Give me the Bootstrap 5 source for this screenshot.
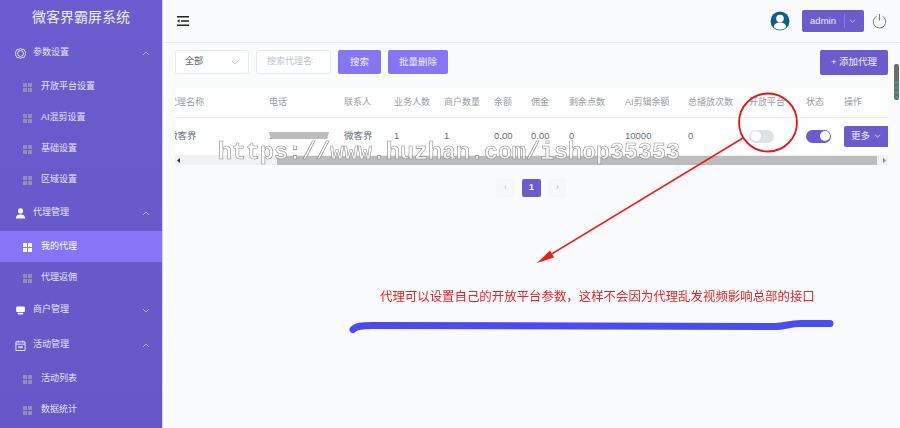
<!DOCTYPE html>
<html lang="zh">
<head>
  <meta charset="UTF-8">
  <title>微客界霸屏系统</title>
  <link href="https://cdn.jsdelivr.net/npm/bootstrap@5.3.3/dist/css/bootstrap.min.css" rel="stylesheet">
  <style>
    html, body { height: 100%; }
    body {
      background: #fafbfd;
      overflow: hidden;
      font-family: "Liberation Sans", "Noto Sans CJK SC", sans-serif;
      font-size: 9px;
      color: #606266;
    }
    .app-shell { height: 428px; position: relative; opacity: .995; }
    .side-panel {
      width: 163px;
      flex: none;
      background: linear-gradient(#6a5bcf, #6656c6);
      border-right: 1px solid #d5d5e0;
      color: #e8e6f8;
    }
    .side-title { height: 35px; font-size: 14px; color: #eeeefa; }
    .side-group { height: 36px; padding: 0 12px 0 15px; gap: 7px; }
    .side-group.short-group { height: 34px; }
    .side-group svg { flex: none; }
    .side-item { height: 31px; padding: 1px 0 0 23px; gap: 9px; }
    .side-item.active-item { background: #8674f4; color: #fff; }
    .side-chev { margin-left: auto; }
    .main-panel { min-width: 0; }
    .top-bar { height: 43px; border-bottom: 1px solid #e9ebef; padding: 0 13px 0 14px; }
    .user-face { margin-right: 12px; }
    .user-btn {
      width: 62px; height: 22px; background: #6a5acd; color: #eef;
      border-radius: 2px; font-size: 9.5px;
    }
    .user-btn span:first-child { width: 43px; text-align: center; border-right: 1px solid #8a7cdc; line-height: 14px; }
    .tool-row { padding: 7px 12px 0 12px; height: 45px; gap: 7px; }
    .fake-field { height: 24px; background: #fff; border: 1px solid #e9ebef; border-radius: 2px; }
    .fake-select { width: 74px; padding: 0 9px; color: #606266; }
    .fake-input { width: 75px; padding: 0 10px; color: #c0c4cc; }
    .fake-input span { display: block; width: 46px; overflow: hidden; white-space: nowrap; }
    .purple-btn {
      height: 24px; padding: 0; border: 0; border-radius: 2px;
      font-size: 9.5px; color: #f2f0ff; background: #8674f4;
    }
    .btn-search { width: 43px; }
    .btn-batch { width: 60px; }
    .btn-add { width: 68px; height: 25px; background: #6a5acd; margin-left: auto; }
    .table-wrap { margin: 0 12px; width: 713px; background: #fff; overflow: hidden; }
    .grid-table { table-layout: fixed; width: 713px; margin: 0; font-size: 9.5px; }
    .grid-table th, .grid-table td {
      padding: 0; background: transparent; white-space: nowrap; overflow: hidden;
      font-weight: 400; border-color: #eef0f3; vertical-align: middle; color: #6c6f76;
    }
    .grid-table th { height: 29px; padding-top: 1px; color: #9a9da4; font-size: 9px; }
    .grid-table td { height: 38px; }
    .clip-cell { margin-left: -7px; display: block; }
    .phone-mask { display: block; position: relative; }
    .phone-mask i {
      position: absolute; left: 0; top: 3px; width: 60px; height: 7px;
      background: #bdbdbd; clip-path: polygon(0 0, 100% 0, 97% 100%, 3% 100%);
    }
    .tog { display: block; width: 25px; height: 13px; border-radius: 7px; position: relative; background: #dfe2e8; }
    .tog::after {
      content: ""; position: absolute; top: 1.5px; left: 1.5px; width: 10px; height: 10px; border-radius: 50%; background: #fff;
    }
    .tog.tog-on { background: #6a5acd; }
    .tog.tog-on::after { left: 13.5px; }
    .more-btn {
      width: 44px; height: 21px; background: #6a5acd; color: #f0eeff;
      border-radius: 2px 0 0 2px; font-size: 9.5px;
    }
    .scroll-track { height: 9px; background: #f1f1f1; width: 713px; margin: 0 12px; padding: 0 2px; }
    .scroll-thumb { background: #bcbcbc; height: 9px; width: 600px; margin-left: 97px; }
    .pager { padding-top: 14px; gap: 7px; }
    .page-cell { width: 19px; height: 18px; background: #f6f7f9; color: #b5b8c0; border-radius: 2px; font-size: 9px; }
    .page-cell.cur { background: #6a5acd; color: #fff; font-weight: 700; }
    .over-art { position: absolute; left: 0; top: 0; pointer-events: none; }
    .note-text {
      position: absolute; left: 380px; top: 287px; font-size: 12.43px; line-height: 18px;
      color: #ee2020; white-space: nowrap;
      font-family: "Noto Sans CJK SC", sans-serif; font-weight: 400;
    }
    .stamp-text {
      position: absolute; left: 218px; top: 138px; white-space: nowrap;
      font-family: "Liberation Mono", monospace; font-size: 23.33px; font-weight: 700; line-height: 30px;
      color: rgba(255,255,255,.8); -webkit-text-stroke: .6px #8a8a8a; opacity: .95;
    }
  </style>
</head>
<body>
<div class="app-shell d-flex">

  <!-- Sidebar -->
  <div class="side-panel d-flex flex-column">
    <div class="side-title d-flex align-items-center justify-content-center">微客界霸屏系统</div>

    <div class="side-group d-flex align-items-center">
      <svg width="11" height="11" viewBox="0 0 12 12" fill="none" stroke="#fff" stroke-width=".9"><circle cx="6" cy="6" r="3.200"/><path d="M6 .6l1.700 1 2-.1.9 1.700 1 1.400-.4 1.400.4 1.400-1 1.400-.9 1.700-2-.1-1.700 1-1.700-1-2 .1-.9-1.700-1-1.400.4-1.400-.4-1.400 1-1.400.9-1.700 2 .1z"/></svg>
      <span>参数设置</span>
      <svg class="side-chev" width="8" height="5" viewBox="0 0 8 5" fill="none" stroke="#cfcaf0" stroke-width=".8"><path d="M1 4l3-3 3 3"/></svg>
    </div>
    <div class="side-item d-flex align-items-center"><svg width="9" height="9" viewBox="0 0 9 9" fill="#8f8fb8"><path d="M0 0h4v4H0zM5 0h4v4H5zM0 5h4v4H0zM5 5h4v4H5z"/></svg><span>开放平台设置</span></div>
    <div class="side-item d-flex align-items-center"><svg width="9" height="9" viewBox="0 0 9 9" fill="#8f8fb8"><path d="M0 0h4v4H0zM5 0h4v4H5zM0 5h4v4H0zM5 5h4v4H5z"/></svg><span>AI混剪设置</span></div>
    <div class="side-item d-flex align-items-center"><svg width="9" height="9" viewBox="0 0 9 9" fill="#8f8fb8"><path d="M0 0h4v4H0zM5 0h4v4H5zM0 5h4v4H0zM5 5h4v4H5z"/></svg><span>基础设置</span></div>
    <div class="side-item d-flex align-items-center"><svg width="9" height="9" viewBox="0 0 9 9" fill="#8f8fb8"><path d="M0 0h4v4H0zM5 0h4v4H5zM0 5h4v4H0zM5 5h4v4H5z"/></svg><span>区域设置</span></div>

    <div class="side-group d-flex align-items-center">
      <svg width="11" height="11" viewBox="0 0 12 12" fill="#fff"><circle cx="6" cy="3.200" r="2.800"/><path d="M1 11.500C1 8 3 7 6 7s5 1 5 4.500z"/></svg>
      <span>代理管理</span>
      <svg class="side-chev" width="8" height="5" viewBox="0 0 8 5" fill="none" stroke="#cfcaf0" stroke-width=".8"><path d="M1 4l3-3 3 3"/></svg>
    </div>
    <div class="side-item active-item d-flex align-items-center"><svg width="9" height="9" viewBox="0 0 9 9" fill="#fff"><path d="M0 0h4v4H0zM5 0h4v4H5zM0 5h4v4H0zM5 5h4v4H5z"/></svg><span>我的代理</span></div>
    <div class="side-item d-flex align-items-center"><svg width="9" height="9" viewBox="0 0 9 9" fill="#8f8fb8"><path d="M0 0h4v4H0zM5 0h4v4H5zM0 5h4v4H0zM5 5h4v4H5z"/></svg><span>代理返佣</span></div>

    <div class="side-group short-group d-flex align-items-center">
      <svg width="11" height="11" viewBox="-1 0 14 12" fill="#fff"><path d="M2 .8h8a1.500 1.500 0 011.500 1.500V7a1 1 0 01-1 1h-9a1 1 0 01-1-1V2.300A1.500 1.500 0 012 .8zM2.500 8.800h7v1.400a1 1 0 01-1 1h-5a1 1 0 01-1-1z"/></svg>
      <span>商户管理</span>
      <svg class="side-chev" width="8" height="5" viewBox="0 0 8 5" fill="none" stroke="#cfcaf0" stroke-width=".8"><path d="M1 1l3 3 3-3"/></svg>
    </div>
    <div class="side-group d-flex align-items-center">
      <svg width="11" height="11" viewBox="0 0 12 12" fill="none" stroke="#fff" stroke-width=".9"><path d="M1 2h10v9.500H1zM1 4.500h10M3.500 .5v2M8.500 .5v2"/><path d="M3.500 6.500h5v2.500h-5z" fill="#c9c4ee" stroke="none"/></svg>
      <span>活动管理</span>
      <svg class="side-chev" width="8" height="5" viewBox="0 0 8 5" fill="none" stroke="#cfcaf0" stroke-width=".8"><path d="M1 4l3-3 3 3"/></svg>
    </div>
    <div class="side-item d-flex align-items-center"><svg width="9" height="9" viewBox="0 0 9 9" fill="#8f8fb8"><path d="M0 0h4v4H0zM5 0h4v4H5zM0 5h4v4H0zM5 5h4v4H5z"/></svg><span>活动列表</span></div>
    <div class="side-item d-flex align-items-center"><svg width="9" height="9" viewBox="0 0 9 9" fill="#8f8fb8"><path d="M0 0h4v4H0zM5 0h4v4H5zM0 5h4v4H0zM5 5h4v4H5z"/></svg><span>数据统计</span></div>
  </div>

  <!-- Main -->
  <div class="main-panel flex-grow-1 d-flex flex-column">
    <div class="top-bar d-flex align-items-center">
      <svg width="12" height="10" viewBox="0 0 12 10" fill="#222"><path d="M0 0h12v1.400H0zM4 4.300h8v1.400H4zM0 8.600h12V10H0zM0 5l2.600-1.800v3.600z"/></svg>
      <div class="ms-auto d-flex align-items-center">
        <svg class="user-face" width="20" height="20" viewBox="0 0 20 20"><circle cx="10" cy="10" r="9.500" fill="#0f5f85"/><circle cx="10" cy="7.500" r="3.800" fill="#fff"/><path d="M3.800 16c.6-3.600 3-4.600 6.200-4.600s5.600 1 6.200 4.600c-1.600 1.700-3.800 2.700-6.200 2.700S5.400 17.700 3.800 16z" fill="#fff"/></svg>
        <div class="user-btn d-flex align-items-center">
          <span>admin</span>
          <svg class="ms-1" width="7" height="4" viewBox="0 0 8 5" fill="none" stroke="#ddd8fa" stroke-width="1"><path d="M1 1l3 3 3-3"/></svg>
        </div>
        <svg class="ms-2" width="15" height="16" viewBox="0 0 16 17" fill="none" stroke="#6f6f6f" stroke-width="1"><path d="M8 1v7M4.800 3.400a6.700 6.700 0 106.400 0"/></svg>
      </div>
    </div>

    <div class="tool-row d-flex align-items-start">
      <div class="fake-field fake-select d-flex align-items-center justify-content-between">
        <span>全部</span>
        <svg width="8" height="5" viewBox="0 0 8 5" fill="none" stroke="#c0c4cc" stroke-width=".8"><path d="M1 1l3 3 3-3"/></svg>
      </div>
      <div class="fake-field fake-input d-flex align-items-center"><span>搜索代理名称</span></div>
      <button type="button" class="btn purple-btn btn-search">搜索</button>
      <button type="button" class="btn purple-btn btn-batch">批量删除</button>
      <button type="button" class="btn purple-btn btn-add">+ 添加代理</button>
    </div>

    <div class="table-wrap">
      <table class="table grid-table">
        <colgroup>
          <col style="width:94px"><col style="width:75px"><col style="width:50px"><col style="width:50px"><col style="width:50px"><col style="width:37px"><col style="width:38px"><col style="width:56px"><col style="width:63px"><col style="width:61px"><col style="width:57px"><col style="width:38px"><col style="width:44px">
        </colgroup>
        <thead>
          <tr>
            <th><span class="clip-cell">代理名称</span></th><th>电话</th><th>联系人</th><th>业务人数</th><th>商户数量</th><th>余额</th><th>佣金</th><th>剩余点数</th><th>AI剪辑余额</th><th>总播放次数</th><th>开放平台</th><th>状态</th><th>操作</th>
          </tr>
        </thead>
        <tbody>
          <tr>
            <td><span class="clip-cell">微客界</span></td>
            <td><span class="phone-mask">1<i></i></span></td>
            <td>微客界</td><td>1</td><td>1</td><td>0.00</td><td>0.00</td><td>0</td><td>10000</td><td>0</td>
            <td><span class="tog"></span></td>
            <td><span class="tog tog-on"></span></td>
            <td><div class="more-btn d-flex align-items-center justify-content-center gap-1">更多<svg width="7" height="4" viewBox="0 0 8 5" fill="none" stroke="#f0eeff" stroke-width="1"><path d="M1 1l3 3 3-3"/></svg></div></td>
          </tr>
        </tbody>
      </table>
    </div>

    <div class="scroll-track d-flex align-items-center">
      <svg width="3" height="5" viewBox="0 0 3 5" fill="#333"><path d="M3 0v5L0 2.500z"/></svg>
      <div class="scroll-thumb"></div>
      <svg class="ms-auto" width="3" height="5" viewBox="0 0 3 5" fill="#888"><path d="M0 0v5l3-2.500z"/></svg>
    </div>

    <div class="pager d-flex justify-content-center">
      <div class="page-cell d-flex align-items-center justify-content-center">&lsaquo;</div>
      <div class="page-cell cur d-flex align-items-center justify-content-center">1</div>
      <div class="page-cell d-flex align-items-center justify-content-center">&rsaquo;</div>
    </div>
  </div>

  <!-- Hand-drawn notes on top of the screenshot -->
  <div class="stamp-text">https://www.huzhan.com/ishop35353</div>
  <svg class="over-art" width="900" height="428" viewBox="0 0 900 428" fill="none">
    <rect x="894" y="64" width="5" height="36" rx="2" fill="#6b6b6b"/>
    <path d="M894.500 81h4v3h-4zM894.500 86h4v3h-4zM894.500 91h4v3h-4zM894.500 96h4v2h-4z" fill="#3f9c70"/>
    <ellipse cx="768" cy="122.500" rx="29" ry="29" stroke="#e3141e" stroke-width="1.800"/>
    <path d="M743 138L545 258" stroke="#ee1c1c" stroke-width="1.600"/>
    <path d="M537 263L550 250.500L554 257.500z" fill="#ee1c1c"/>
    <path d="M353 329.500C356 326 362 325.500 372 325.500L775 326.500C785 326.500 790 323.500 800 323.500L830 323.500" stroke="#4a4af4" stroke-width="7" stroke-linecap="round"/>
  </svg>
  <div class="note-text">代理可以设置自己的开放平台参数，这样不会因为代理乱发视频影响总部的接口</div>
</div>
</body>
</html>
